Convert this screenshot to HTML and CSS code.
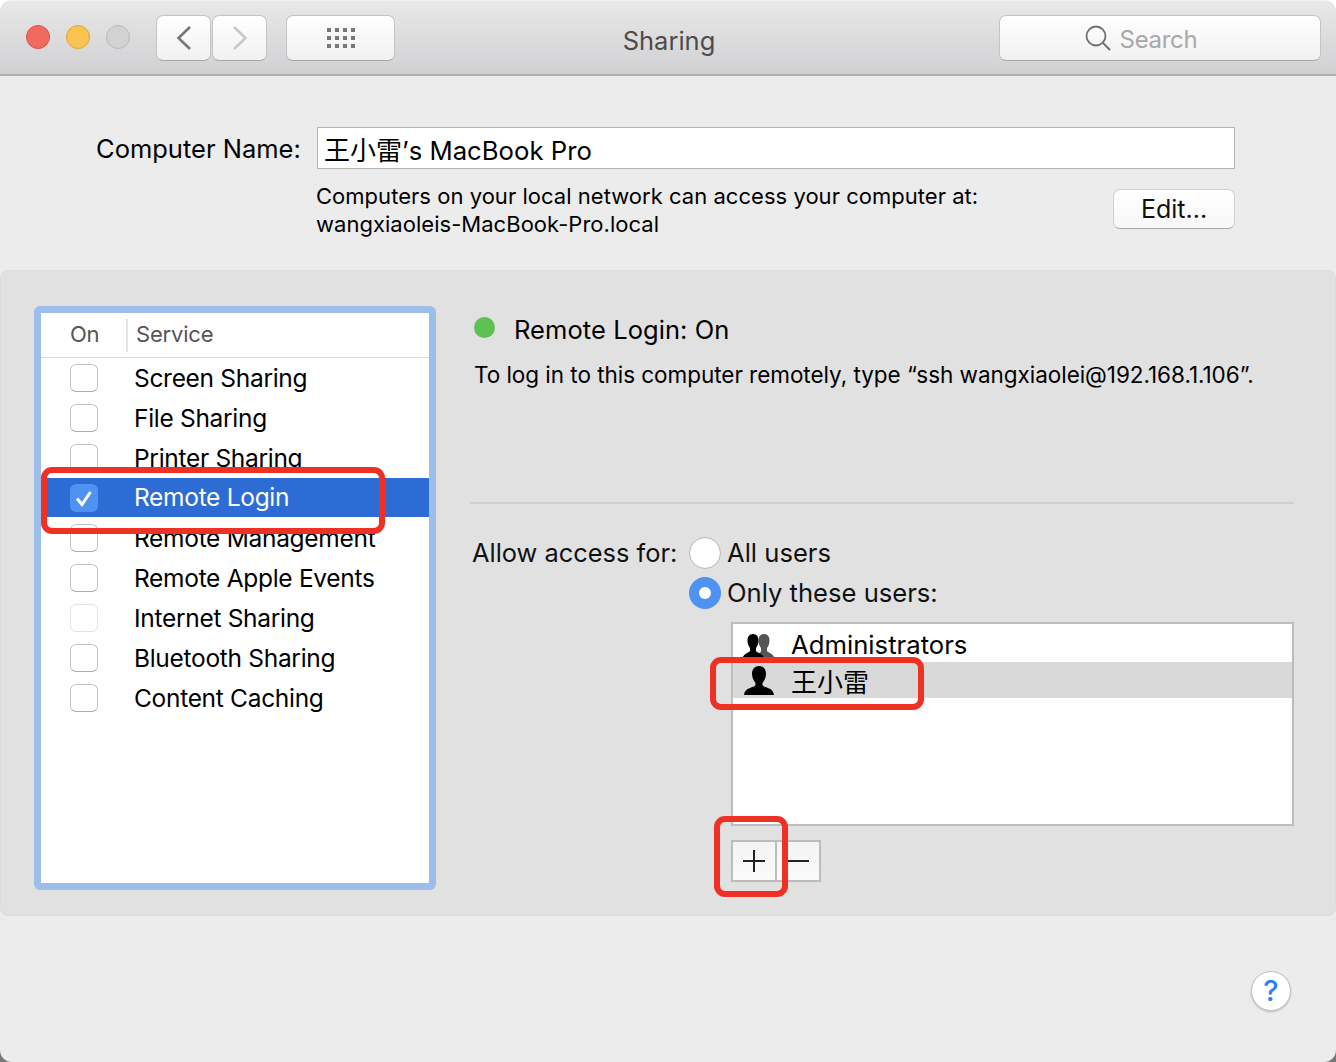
FILE: index.html
```html
<!DOCTYPE html>
<html lang="en">
<head>
<meta charset="utf-8">
<title>Sharing</title>
<link rel="stylesheet" href="styles.css">
</head>
<body>
<div class="window">
  <header class="titlebar">
    <div class="traffic">
      <span class="light red"></span><span class="light yellow"></span><span class="light grey"></span>
    </div>
    <div class="navgroup">
      <button class="tbtn nav"><svg width="18" height="26" viewBox="0 0 18 26"><path d="M15 2 3.5 13 15 24" fill="none" stroke="#777" stroke-width="2.6"/></svg></button>
      <button class="tbtn nav"><svg width="18" height="26" viewBox="0 0 18 26"><path d="M3 2 14.500 13 3 24" fill="none" stroke="#c8c8c8" stroke-width="2.600"/></svg></button>
    </div>
    <button class="tbtn grid-btn">
      <svg width="30" height="22" viewBox="0 0 30 22" fill="#777">
        <rect x="1" y="1" width="4" height="4"/><rect x="9" y="1" width="4" height="4"/><rect x="17" y="1" width="4" height="4"/><rect x="25" y="1" width="4" height="4"/>
        <rect x="1" y="9" width="4" height="4"/><rect x="9" y="9" width="4" height="4"/><rect x="17" y="9" width="4" height="4"/><rect x="25" y="9" width="4" height="4"/>
        <rect x="1" y="17" width="4" height="4"/><rect x="9" y="17" width="4" height="4"/><rect x="17" y="17" width="4" height="4"/><rect x="25" y="17" width="4" height="4"/>
      </svg>
    </button>
    <div class="title">Sharing</div>
    <div class="tbtn search">
      <svg width="26" height="26" viewBox="0 0 26 26"><circle cx="11" cy="11" r="9.500" fill="none" stroke="#707070" stroke-width="1.800"/><path d="M17.800 17.800 25 25" stroke="#707070" stroke-width="2"/></svg>
      <span class="search-text">Search</span>
    </div>
  </header>

  <section class="name-section">
    <div class="name-row">
      <label class="name-label">Computer Name:</label>
      <div class="name-input"><span class="cjk">王小雷</span>’s MacBook Pro</div>
    </div>
    <div class="address-row">
      <p class="address">Computers on your local network can access your computer at:<br>wangxiaoleis-MacBook-Pro.local</p>
      <button class="edit">Edit...</button>
    </div>
  </section>

  <section class="panel">
    <div class="services">
      <div class="services-inner">
        <div class="services-head"><span class="head-on">On</span><span class="head-service">Service</span></div>
        <ul class="service-list">
          <li class="row"><span class="check"></span>Screen Sharing</li>
          <li class="row"><span class="check"></span>File Sharing</li>
          <li class="row"><span class="check"></span>Printer Sharing</li>
          <li class="row selected"><span class="check on"><svg width="20" height="20" viewBox="0 0 20 20"><path d="M3 10.500 8 16.500 16.500 4" fill="none" stroke="#fff" stroke-width="3"/></svg></span>Remote Login</li>
          <li class="row"><span class="check"></span>Remote Management</li>
          <li class="row"><span class="check"></span>Remote Apple Events</li>
          <li class="row"><span class="check faint"></span>Internet Sharing</li>
          <li class="row"><span class="check"></span>Bluetooth Sharing</li>
          <li class="row"><span class="check"></span>Content Caching</li>
        </ul>
      </div>
    </div>
    <div class="detail">
      <div class="status"><span class="dot"></span><span class="status-text">Remote Login: On</span></div>
      <p class="hint">To log in to this computer remotely, type “ssh wangxiaolei@192.168.1.106”.</p>
      <hr class="divider">
      <div class="access">
        <span class="access-label">Allow access for:</span>
        <div class="radios">
          <div class="radio-row"><span class="radio"></span>All users</div>
          <div class="radio-row"><span class="radio active"></span>Only these users:</div>
        </div>
      </div>
      <div class="users">
        <div class="user">
          <svg class="uicon group" width="34" height="26" viewBox="0 0 34 26">
            <path fill="#555" d="M22 0c4 0 5.500 3 5.500 6.500 0 3-1 6-2.500 7.500v3c1 2 7.500 2.500 8 9H14c.5-6.500 5-7 5-9v-3c-1.500-1.500-2.500-4.500-2.500-7.500C16.500 3 18 0 22 0Z"/>
            <path fill="#000" d="M11 0c4 0 5.500 3 5.500 6.500 0 3-1 6-2.500 7.500v3c1 2 8 2.500 8.500 9H0c.5-6.500 7-7 8-9v-3C6.500 12.500 5.500 9.500 5.500 6.500 5.500 3 7 0 11 0Z"/>
          </svg>
          <span>Administrators</span>
        </div>
        <div class="user current">
          <svg class="uicon" width="34" height="30" viewBox="0 0 34 30">
            <path fill="#000" d="M17 1c5 0 7 4 7 8 0 4-2 7-3.500 9v2c1 3 11 2 11.500 10H2c.5-8 10.500-7 11.500-10v-2C12 16 10 13 10 9c0-4 2-8 7-8Z"/>
          </svg>
          <span class="cjk">王小雷</span>
        </div>
      </div>
      <div class="addremove">
        <button class="ar"><svg width="22" height="22" viewBox="0 0 22 22"><path d="M0 11h22M11 0v22" stroke="#222" stroke-width="2"/></svg></button>
        <button class="ar"><svg width="22" height="22" viewBox="0 0 22 22"><path d="M0 11h22" stroke="#222" stroke-width="2"/></svg></button>
      </div>
    </div>
  </section>

  <footer class="footer">
    <button class="help">?</button>
  </footer>

  <div class="mark mark-login"></div>
  <div class="mark mark-user"></div>
  <div class="mark mark-add"></div>
</div>
</body>
</html>
```
FILE: styles.css
```css
* { box-sizing: border-box; }
html { background: linear-gradient(#fff 50%, #777 50%); }
body {
  margin: 0;
  width: 1336px;
  height: 1062px;
  overflow: hidden;
  font-family: Inter, "Noto Sans CJK SC", sans-serif;
  color: #000;
}
button { font-family: inherit; padding: 0; margin: 0; }
ul, p { margin: 0; padding: 0; }
.cjk { font-family: "Noto Sans CJK SC", sans-serif; }

.window {
  position: relative;
  width: 1336px;
  height: 1062px;
  background: #ececec;
  border-radius: 12px;
  overflow: hidden;
  display: flex;
  flex-direction: column;
}

/* Title bar */
.titlebar {
  height: 76px;
  flex: none;
  display: flex;
  align-items: flex-start;
  padding: 14px 15px 0 26px;
  background: linear-gradient(#e9e8e9, #d1d0d2);
  border-top: 1px solid #f3f3f3;
  border-bottom: 2px solid #b1b0b1;
}
.traffic { display: flex; gap: 16px; margin: 10px 0 0; width: 130px; flex: none; }
.light { width: 24px; height: 24px; border-radius: 50%; border: 1px solid; }
.red { background: #f16a60; border-color: #dc5047; }
.yellow { background: #f8c351; border-color: #dfa53b; }
.grey { background: #d2d2d2; border-color: #b9b9b9; }
.tbtn {
  height: 46px;
  border: 1px solid #c5c4c5;
  border-bottom-color: #a9a8a9;
  border-radius: 7px;
  background: linear-gradient(#fff, #f1f1f1);
  display: flex;
  align-items: center;
  justify-content: center;
}
.navgroup { display: flex; gap: 1px; width: 130px; flex: none; }
.nav { width: 55px; }
.grid-btn { width: 109px; flex: none; }
.title {
  width: 604px;
  flex: none;
  padding-right: 56px;
  text-align: center;
  font-size: 25.500px;
  line-height: 52px;
  color: #4c4c4c;
}
.search {
  width: 322px;
  flex: none;
  gap: 9px;
  padding-right: 38px;
  color: #a8a8a8;
  font-size: 24px;
  letter-spacing: -.3px;
}
.search-text { margin-top: 2px; }

/* Computer name */
.name-section {
  height: 194px;
  flex: none;
  padding: 50px 101px 0 96px;
  font-size: 25.700px;
}
.name-row { display: flex; align-items: center; gap: 15px; height: 44px; }
.name-label { font-size: 25.500px; white-space: nowrap; width: 206px; flex: none; margin-top: 1px; }
.name-input {
  flex: 1;
  height: 42px;
  border: 1px solid #b4b4b4;
  background: #fff;
  line-height: 42px;
  padding-left: 6px;
  white-space: nowrap;
}
.name-input .cjk { font-size: 26px; }
.address-row { display: flex; justify-content: space-between; padding: 12px 0 0 220px; }
.address { font-size: 22px; line-height: 28px; letter-spacing: .03px; white-space: nowrap; }
.edit {
  width: 122px;
  height: 40px;
  margin-top: 7px;
  font-size: 25px;
  background: linear-gradient(#fff, #f7f7f7);
  border: 1px solid #d0d0d0;
  border-bottom-color: #aaa;
  border-radius: 7px;
  color: #111;
}

/* Panel */
.panel {
  height: 646px;
  flex: none;
  display: flex;
  padding: 35px 42px 0 33px;
  background: #e1e1e1;
  border: 1px solid #dcdcdc;
  border-radius: 8px;
}
.services {
  width: 402px;
  height: 584px;
  flex: none;
  padding: 7px;
  background: #9dbdea;
  border-radius: 6px;
}
.services-inner { height: 100%; background: #fff; }
.services-head {
  height: 45px;
  display: flex;
  align-items: center;
  border-bottom: 1px solid #d9d9d9;
  font-size: 22px;
  color: #555;
  letter-spacing: -.2px;
}
.head-on { width: 87px; height: 33px; line-height: 31px; padding-left: 29px; border-right: 2px solid #e3e3e3; }
.head-service { padding: 0 0 2px 8px; }
.service-list { list-style: none; }
.row {
  height: 40px;
  display: flex;
  align-items: center;
  font-size: 24.500px;
  letter-spacing: -.3px;
  padding: 0 0 1px 29px;
  white-space: nowrap;
}
.row.selected { background: #2c6cd4; color: #fff; height: 39px; margin-bottom: 1px; }
.check {
  width: 28px;
  height: 28px;
  flex: none;
  margin: 1px 36px 0 0;
  border: 1.500px solid #c4c4c4;
  border-bottom-color: #aeaeae;
  border-radius: 6px;
  background: #fff;
  display: flex;
  align-items: center;
  justify-content: center;
}
.check.on { background: #4f92f2; border: 0; }
.check.faint { border-color: #e2e2e2; }

/* Detail */
.detail { flex: 1; padding-left: 34px; }
.status { display: flex; align-items: center; height: 48px; padding-left: 4px; }
.dot { width: 21px; height: 21px; border-radius: 50%; background: #5cc152; margin: -5px 19px 0 0; }
.status-text { font-size: 25.500px; letter-spacing: .07px; margin-top: -2px; }
.hint { font-size: 22.500px; letter-spacing: -.04px; line-height: 30px; margin-top: 6px; padding-left: 4px; white-space: nowrap; }
.divider { height: 2px; border: 0; margin: 112px 0 0; background: #d0d0d0; }
.access { display: flex; margin-top: 29px; padding-left: 2px; font-size: 25.600px; color: #111; }
.access-label { width: 217px; line-height: 40px; flex: none; font-size: 25.400px; }
.radio-row { height: 40px; display: flex; align-items: center; gap: 6px; padding-bottom: 2px; }
.radio { width: 32px; height: 32px; margin-top: 2px; border-radius: 50%; background: #fff; border: 1px solid #b5b5b5; }
.radio.active { background: #4f92f2; border: 0; position: relative; }
.radio.active::after { content: ""; position: absolute; left: 10px; top: 10px; width: 12px; height: 12px; background: #fff; border-radius: 50%; }
.users {
  width: 563px;
  height: 204px;
  margin: 9px 0 0 261px;
  background: #fff;
  border: 2px solid #bdbdbd;
}
.user { display: flex; align-items: center; font-size: 25.700px; height: 38px; padding: 2px 0 0 9px; }
.user.current { background: #d9d9d9; height: 36px; padding-top: 0; font-size: 26px; }
.uicon { flex: none; margin-right: 15px; }
.uicon.group { margin-top: 6px; }
.addremove { display: flex; margin: 14px 0 0 261px; width: 90px; height: 42px; border: 2px solid #bcbcbc; background: #bcbcbc; gap: 2px; }
.ar { flex: 1; border: 0; background: linear-gradient(#f4f4f4, #fafafa); display: flex; align-items: center; justify-content: center; }

/* Footer */
.footer { flex: 1; display: flex; justify-content: flex-end; padding: 55px 45px 0 0; }
.help {
  width: 40px;
  height: 40px;
  border-radius: 50%;
  background: #fff;
  border: 1px solid #c0c0c0;
  box-shadow: 0 1px 2px rgba(0,0,0,.2);
  color: #2f80f6;
  font-size: 29px;
  font-weight: 500;
  line-height: 36px;
}

/* Annotations over the screenshot */
.mark { position: absolute; border: 6px solid #ee3124; border-radius: 11px; }
.mark-login { left: 41px; top: 467px; width: 344px; height: 67px; }
.mark-user { left: 710px; top: 657px; width: 214px; height: 53px; }
.mark-add { left: 714px; top: 816px; width: 74px; height: 81px; }
```
